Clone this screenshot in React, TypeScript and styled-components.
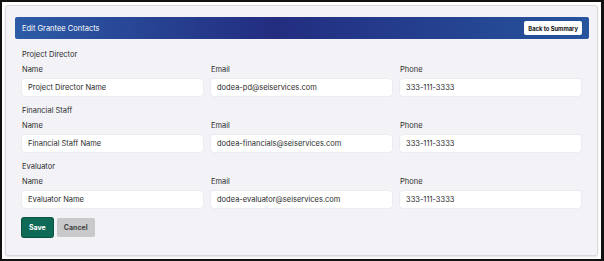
import React from "react";
import styled, { createGlobalStyle } from "styled-components";

const GlobalStyle = createGlobalStyle`
  html, body {
    margin: 0;
    padding: 0;
    background: #fff;
  }
  body {
    font-family: Inter, "Noto Sans", sans-serif;
  }
  * {
    box-sizing: border-box;
  }
`;

type Contact = {
  title: string;
  name: string;
  email: string;
  phone: string;
};

const contacts: Contact[] = [
  {
    title: "Project Director",
    name: "Project Director Name",
    email: "dodea-pd@seiservices.com",
    phone: "333-111-3333",
  },
  {
    title: "Financial Staff",
    name: "Financial Staff Name",
    email: "dodea-financials@seiservices.com",
    phone: "333-111-3333",
  },
  {
    title: "Evaluator",
    name: "Evaluator Name",
    email: "dodea-evaluator@seiservices.com",
    phone: "333-111-3333",
  },
];

const Frame = styled.div`
  width: 604px;
  height: 261px;
  border: 2px solid #111;
  border-right-width: 3px;
  padding: 3px;
  background: #fff;
`;

const Card = styled.div`
  height: 100%;
  background: #f3f3f7;
  border: 1px solid #d9d9de;
  border-radius: 3px;
  box-shadow: 0 1px 2px rgba(0, 0, 0, 0.12);
  padding: 11px 8px 0 9px;
`;

const Header = styled.div`
  height: 22px;
  display: flex;
  align-items: center;
  justify-content: space-between;
  padding: 0 7px;
  border-radius: 2px;
  background: linear-gradient(90deg, #2c5ba7 0%, #232d80 45%, #26549d 100%);
  color: #fff;
  font-size: 7.5px;
`;

const BackButton = styled.button`
  height: 14px;
  padding: 0 4px;
  border: none;
  border-radius: 2px;
  background: #fff;
  color: #111;
  font-family: Inter, "Noto Sans", sans-serif;
  font-size: 5.8px;
  font-weight: 700;
`;

const Body = styled.div`
  padding: 10px 8px 0 7px;
`;

const Section = styled.div`
  margin-bottom: 9px;
`;

const SectionTitle = styled.div`
  height: 12px;
  line-height: 12px;
  font-size: 7.5px;
  color: #2b2b2b;
  margin-bottom: 3px;
`;

const Row = styled.div`
  display: grid;
  grid-template-columns: 1fr 1fr 1fr;
  column-gap: 8px;
`;

const Field = styled.div`
  display: flex;
  flex-direction: column;
`;

const Label = styled.div`
  height: 12px;
  line-height: 12px;
  font-size: 7.5px;
  color: #2b2b2b;
  margin-bottom: 3px;
`;

const Input = styled.div`
  height: 17px;
  line-height: 17px;
  padding: 0 6px;
  background: #fff;
  border-radius: 3px;
  box-shadow: 0 0 0 0.5px #e6e6ea;
  font-size: 7.5px;
  color: #2b2b2b;
  white-space: nowrap;
  overflow: hidden;
`;

const Actions = styled.div`
  display: flex;
  gap: 4px;
  padding-top: 1px;
`;

const ActionButton = styled.button<{ variant: "primary" | "secondary" }>`
  height: 19px;
  padding: 0 7px;
  border: none;
  border-radius: 2px;
  font-family: Inter, "Noto Sans", sans-serif;
  font-size: 7px;
  font-weight: 700;
  background: ${(p) => (p.variant === "primary" ? "#0e6a57" : "#c9c9cb")};
  color: ${(p) => (p.variant === "primary" ? "#fff" : "#444")};
  box-shadow: ${(p) =>
    p.variant === "primary" ? "0 0 0 1px #0a5446" : "none"};
`;

const App = () => {
  return (
    <Frame>
      <GlobalStyle />
      <Card>
        <Header>
          <span>Edit Grantee Contacts</span>
          <BackButton>Back to Summary</BackButton>
        </Header>
        <Body>
          {contacts.map((c) => (
            <Section key={c.title}>
              <SectionTitle>{c.title}</SectionTitle>
              <Row>
                <Field>
                  <Label>Name</Label>
                  <Input>{c.name}</Input>
                </Field>
                <Field>
                  <Label>Email</Label>
                  <Input>{c.email}</Input>
                </Field>
                <Field>
                  <Label>Phone</Label>
                  <Input>{c.phone}</Input>
                </Field>
              </Row>
            </Section>
          ))}
          <Actions>
            <ActionButton variant="primary">Save</ActionButton>
            <ActionButton variant="secondary">Cancel</ActionButton>
          </Actions>
        </Body>
      </Card>
    </Frame>
  );
};

export default App;
